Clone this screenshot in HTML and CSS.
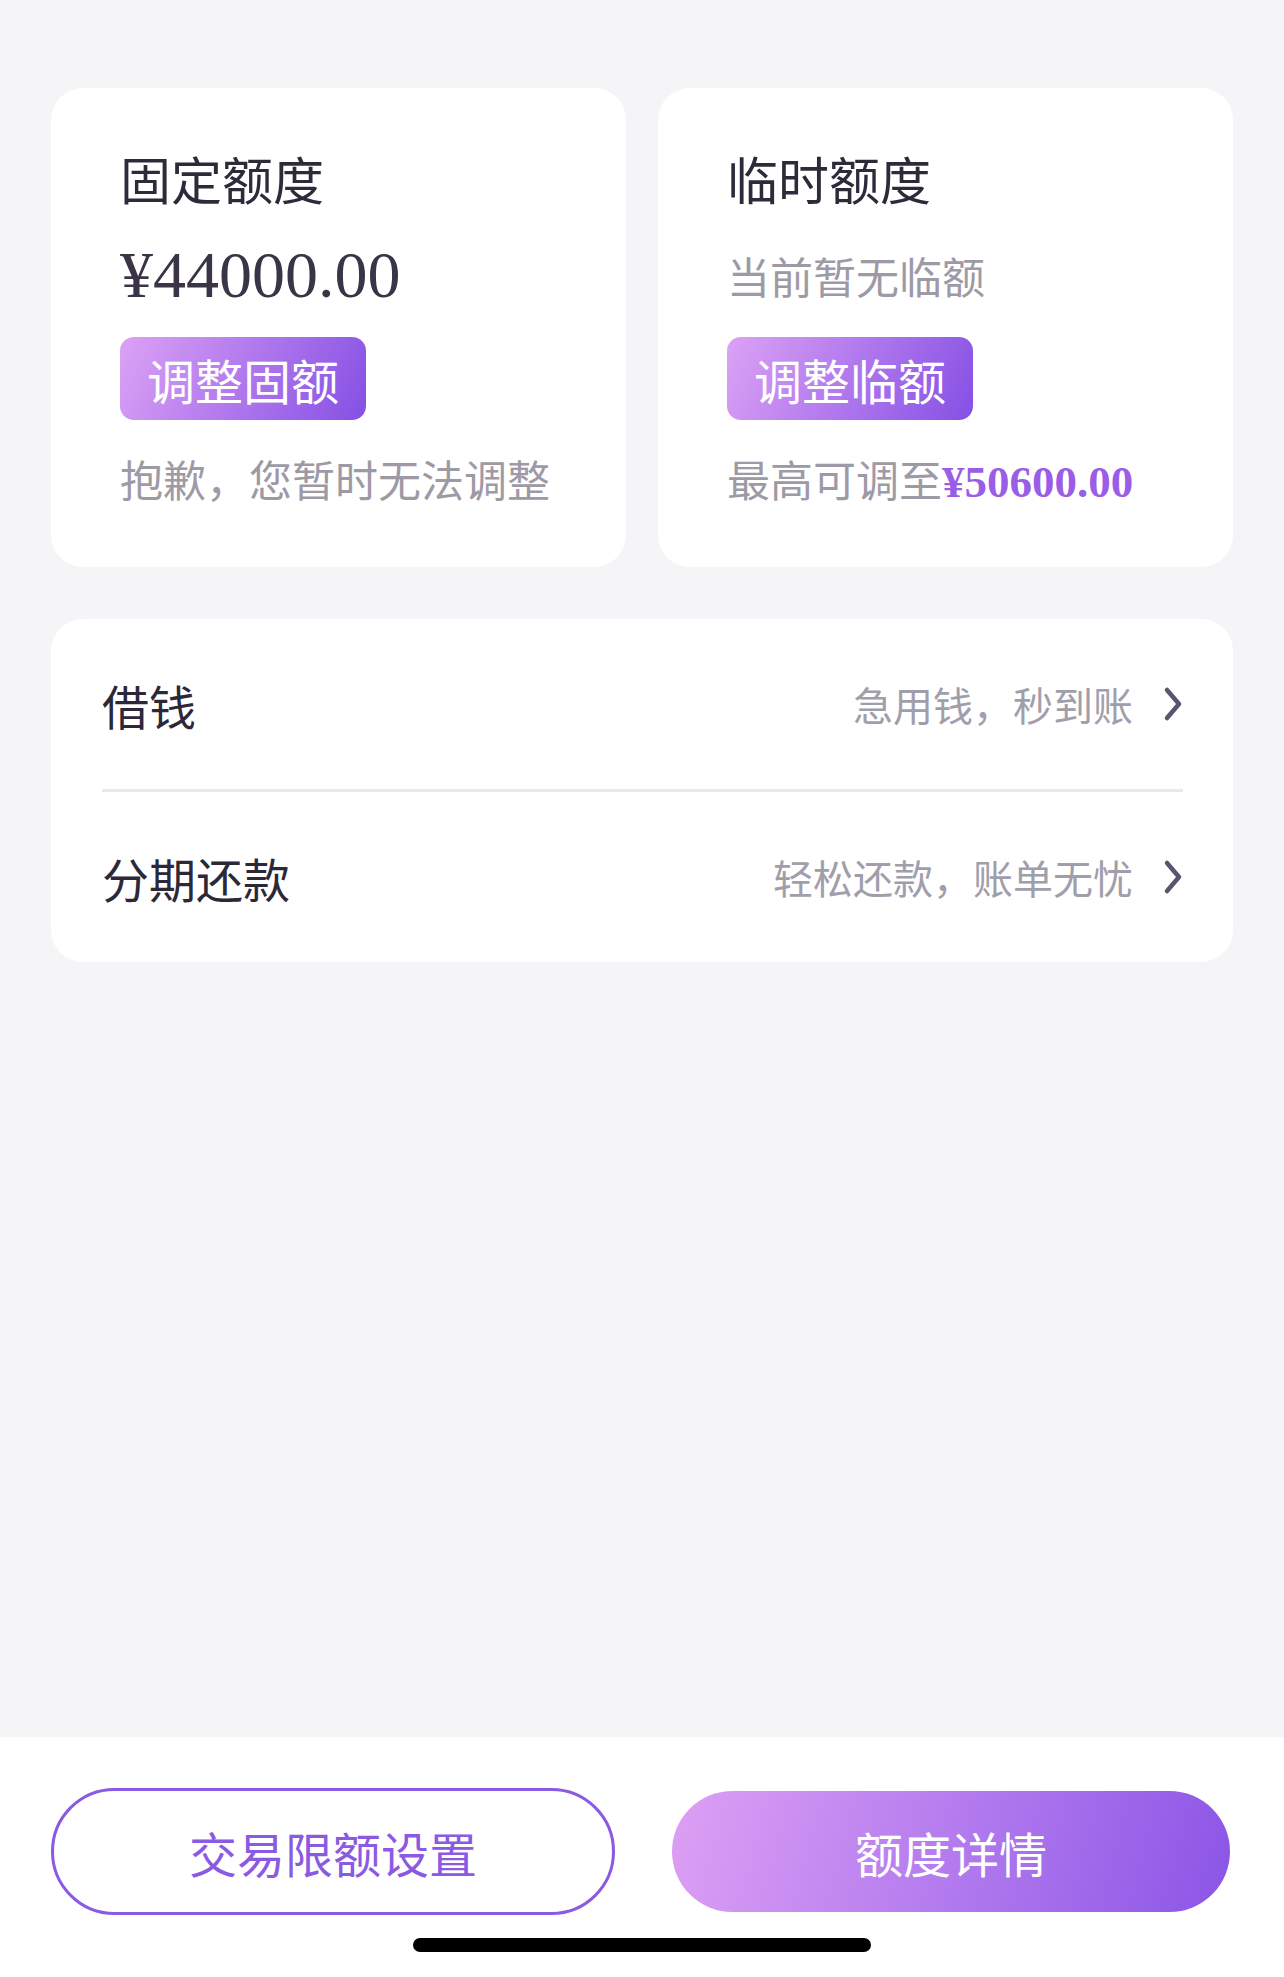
FILE: index.html
```html
<!DOCTYPE html>
<html lang="zh-CN">
<head>
<meta charset="UTF-8">
<meta name="viewport" content="width=device-width, initial-scale=1.0">
<title>我的额度</title>
<link rel="stylesheet" href="styles.css">
</head>
<body>
<main class="contenido">
    <div class="limites">
        <div class="tarjeta">
            <h2 class="titulo">固定额度</h2>
            <p class="monto">¥44000.00</p>
            <button type="button" class="btn-ajuste">调整固额</button>
            <p class="nota">抱歉，您暂时无法调整</p>
        </div>
        <div class="tarjeta">
            <h2 class="titulo">临时额度</h2>
            <p class="sub">当前暂无临额</p>
            <button type="button" class="btn-ajuste">调整临额</button>
            <p class="nota">最高可调至<span class="maximo">¥50600.00</span></p>
        </div>
    </div>
    <div class="menu">
        <a class="fila" href="#">
            <span class="fila-titulo">借钱</span>
            <span class="fila-desc">急用钱，秒到账</span>
            <svg class="flecha" viewBox="0 0 20 36" width="20" height="36"><path d="M4 4 L16 18 L4 32" fill="none" stroke="#5b5470" stroke-width="4.5" stroke-linecap="round" stroke-linejoin="round"/></svg>
        </a>
        <div class="separador"></div>
        <a class="fila" href="#">
            <span class="fila-titulo">分期还款</span>
            <span class="fila-desc">轻松还款，账单无忧</span>
            <svg class="flecha" viewBox="0 0 20 36" width="20" height="36"><path d="M4 4 L16 18 L4 32" fill="none" stroke="#5b5470" stroke-width="4.5" stroke-linecap="round" stroke-linejoin="round"/></svg>
        </a>
    </div>
</main>
<footer class="pie">
    <div class="acciones">
        <button type="button" class="btn-borde">交易限额设置</button>
        <button type="button" class="btn-lleno">额度详情</button>
    </div>
    <div class="indicador"></div>
</footer>
</body>
</html>
```

FILE: styles.css
```css
body {
    margin: 0;
    height: 100vh;
    display: flex;
    flex-direction: column;
    background-color: #f5f5f7;
    font-family: "Noto Sans CJK SC", sans-serif;
    color: #2e2a3a;
}
.contenido {
    flex: 1;
    padding: 88px 51px 0;
}
.limites {
    display: grid;
    grid-template-columns: 1fr 1fr;
    gap: 32px;
}
.tarjeta {
    background: white;
    border-radius: 32px;
    padding: 60px 30px 55px 69px;
}
.titulo {
    margin: 0;
    font-size: 51px;
    line-height: 60px;
    font-weight: normal;
    color: #2e2a3a;
}
.monto, .sub {
    margin: 29px 0 0;
    height: 76px;
    line-height: 76px;
}
.monto {
    font-family: "Liberation Serif", serif;
    font-size: 66px;
    color: #3a3446;
}
.sub {
    font-size: 43px;
    color: #9d9aa6;
}
.btn-ajuste {
    display: block;
    margin-top: 24px;
    height: 83px;
    padding: 0 27px;
    border: none;
    border-radius: 14px;
    background: linear-gradient(115deg, #dca2f5 0%, #ac74ec 55%, #8550e5 100%);
    color: white;
    font-family: inherit;
    font-size: 48px;
    line-height: 1;
}
.nota {
    margin: 28px 0 0;
    font-size: 43px;
    line-height: 60px;
    color: #9d9aa6;
    white-space: nowrap;
}
.maximo {
    font-family: "Liberation Serif", serif;
    font-weight: bold;
    font-size: 45px;
    color: #9a5ee6;
}
.menu {
    margin-top: 52px;
    background: white;
    border-radius: 32px;
}
.fila {
    display: flex;
    align-items: center;
    height: 170px;
    padding: 0 50px 0 51px;
    text-decoration: none;
}
.fila-titulo {
    flex: 1;
    font-size: 47px;
    color: #2c2838;
}
.fila-desc {
    font-size: 40px;
    color: #a19eab;
    margin-right: 30px;
}
.flecha {
    display: block;
}
.separador {
    height: 3px;
    margin: 0 50px 0 51px;
    background: #e9e9ed;
}
.pie {
    height: 240px;
    background: white;
    padding: 51px 51px 0;
    box-sizing: border-box;
}
.acciones {
    display: flex;
    gap: 54px;
}
.acciones button {
    flex: 1;
    height: 127px;
    border-radius: 64px;
    font-family: inherit;
    font-size: 48px;
    line-height: 1;
    cursor: pointer;
}
.btn-borde {
    background: white;
    border: 3px solid #8a5ae3;
    color: #8a5ae3;
}
.btn-lleno {
    border: 3px solid transparent;
    background: linear-gradient(105deg, #dea0f4 0%, #b37bee 50%, #8b55e6 100%);
    background-clip: padding-box;
    color: white;
}
.indicador {
    width: 458px;
    height: 14px;
    margin: 23px auto 0;
    border-radius: 7px;
    background: black;
}
```
